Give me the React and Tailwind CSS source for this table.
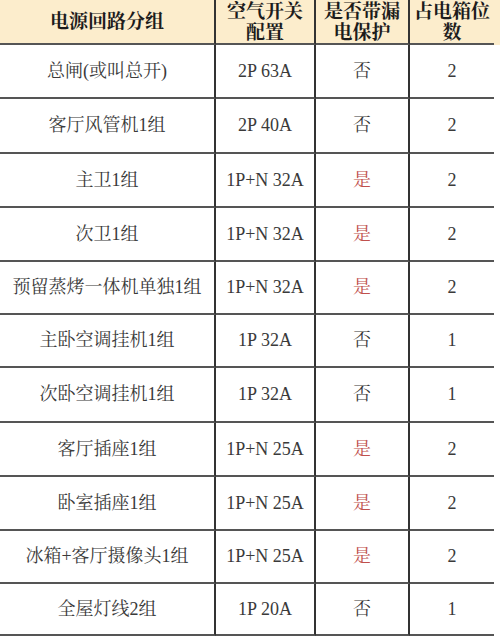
const ROWS = [
  { name: '总闸(或叫总开)', spec: '2P 63A', rcd: false, slots: 2, h: 'h-[54px]' },
  { name: '客厅风管机1组', spec: '2P 40A', rcd: false, slots: 2, h: 'h-[55px]' },
  { name: '主卫1组', spec: '1P+N 32A', rcd: true, slots: 2, h: 'h-[54px]' },
  { name: '次卫1组', spec: '1P+N 32A', rcd: true, slots: 2, h: 'h-[54px]' },
  { name: '预留蒸烤一体机单独1组', spec: '1P+N 32A', rcd: true, slots: 2, h: 'h-[53px]' },
  { name: '主卧空调挂机1组', spec: '1P 32A', rcd: false, slots: 1, h: 'h-[53px]' },
  { name: '次卧空调挂机1组', spec: '1P 32A', rcd: false, slots: 1, h: 'h-[55px]' },
  { name: '客厅插座1组', spec: '1P+N 25A', rcd: true, slots: 2, h: 'h-[54px]' },
  { name: '卧室插座1组', spec: '1P+N 25A', rcd: true, slots: 2, h: 'h-[54px]' },
  { name: '冰箱+客厅摄像头1组', spec: '1P+N 25A', rcd: true, slots: 2, h: 'h-[53px]' },
  { name: '全屋灯线2组', spec: '1P 20A', rcd: false, slots: 1, h: 'h-[52px]' },
]

const GRID = 'grid grid-cols-[216px_100px_94px_84px]'
const CELL = 'flex items-center justify-center text-center border-b-2 border-b-[#555]'
const VLINE = 'border-r-2 border-r-[#333]'

function HeaderRow() {
  return (
    <div className={`${GRID} h-[45px] bg-[#fcedcc] text-[19px] leading-[21px] font-bold text-[#1c1c1c]`}>
      <div className={`${CELL} ${VLINE}`}>电源回路分组</div>
      <div className={`${CELL} ${VLINE}`}>空气开关<br />配置</div>
      <div className={`${CELL} ${VLINE}`}>是否带漏<br />电保护</div>
      <div className={CELL}>占电箱位<br />数</div>
    </div>
  )
}

function Row({ row }) {
  return (
    <div className={`${GRID} ${row.h} text-[18px] text-[#3a3a3a]`}>
      <div className={`${CELL} ${VLINE}`}>{row.name}</div>
      <div className={`${CELL} ${VLINE} whitespace-pre`}>{row.spec}</div>
      <div className={`${CELL} ${VLINE} ${row.rcd ? 'text-[#c0504d]' : ''}`}>
        {row.rcd ? '是' : '否'}
      </div>
      <div className={CELL}>{row.slots}</div>
    </div>
  )
}

export default function App() {
  return (
    <div
      className="w-[500px] h-[639px] overflow-hidden bg-white"
      style={{ fontFamily: '"Liberation Serif", "Noto Serif CJK SC", "Noto Sans CJK SC", serif' }}
    >
      <HeaderRow />
      {ROWS.map(r => <Row key={r.name} row={r} />)}
    </div>
  )
}
